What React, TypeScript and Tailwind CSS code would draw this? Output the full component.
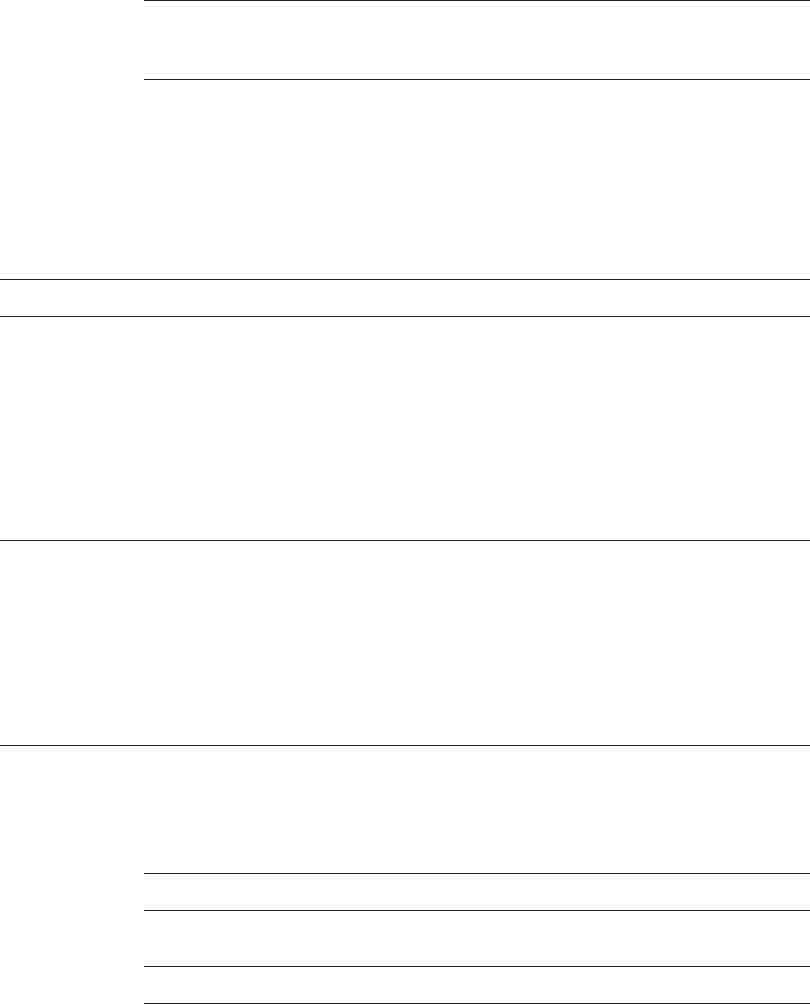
export default function App() {
  return (
    <div className="w-[810px] h-[1004px] bg-white flex flex-col overflow-hidden" style={{ fontFamily: '"Liberation Sans", Arial, sans-serif' }}>
      <div className="ml-[144px] h-[80px] shrink-0 border-t border-b border-[#1f1f1f]"></div>
      <div className="h-[199px] shrink-0"></div>
      <div className="h-[37px] shrink-0 border-t border-[#1f1f1f]"></div>
      <div className="h-[224px] shrink-0 border-t border-[#1f1f1f]"></div>
      <div className="h-[205px] shrink-0 border-t border-[#1f1f1f]"></div>
      <div className="h-[128px] shrink-0 border-t border-[#1f1f1f]"></div>
      <div className="ml-[144px] h-[37px] shrink-0 border-t border-[#1f1f1f]"></div>
      <div className="ml-[144px] h-[56px] shrink-0 border-t border-[#1f1f1f]"></div>
      <div className="ml-[144px] h-[38px] shrink-0 border-t border-b border-[#1f1f1f]"></div>
    </div>
  );
}
